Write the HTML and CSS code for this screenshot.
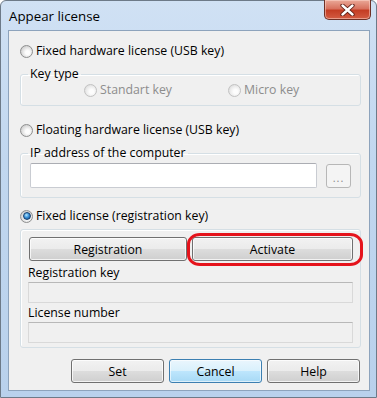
FILE: index.html
```html
<!DOCTYPE html>
<html lang="en">
<head>
  <meta charset="UTF-8">
  <title>Appear license</title>
  <link rel="stylesheet" href="styles.css">
</head>
<body>

<div class="window">
  <div class="titlebar">
    <span class="title">Appear license</span>
    <span class="close">
      <svg width="15" height="12" viewBox="0 0 15 12">
        <path d="M2.5 1.5 L12.5 10.5 M12.5 1.5 L2.5 10.5" stroke="#5a1a12" stroke-width="4.2" stroke-linecap="round"/>
        <path d="M2.5 1.5 L12.5 10.5 M12.5 1.5 L2.5 10.5" stroke="#fff" stroke-width="2.4" stroke-linecap="round"/>
      </svg>
    </span>
  </div>

  <div class="client">
    <div class="option"><span class="radio"></span>Fixed hardware license (USB key)</div>

    <fieldset class="group key-type">
      <legend>Key type</legend>
      <div class="choices">
        <span class="option small disabled first"><span class="radio"></span>Standart key</span>
        <span class="option small disabled"><span class="radio"></span>Micro key</span>
      </div>
    </fieldset>

    <div class="option second"><span class="radio"></span>Floating hardware license (USB key)</div>

    <fieldset class="group ip-group">
      <legend>IP address of the computer</legend>
      <div class="ip-row">
        <input type="text" class="field">
        <button class="browse">...</button>
      </div>
    </fieldset>

    <div class="option third"><span class="radio checked"></span>Fixed license (registration key)</div>

    <fieldset class="group reg-group">
      <div class="reg-buttons">
        <button class="btn reg">Registration</button>
        <span class="marked"><button class="btn activate">Activate</button></span>
      </div>
      <div class="label">Registration key</div>
      <input type="text" class="field disabled" disabled>
      <div class="label">License number</div>
      <input type="text" class="field disabled" disabled>
    </fieldset>

    <div class="actions">
      <button class="btn">Set</button>
      <button class="btn default">Cancel</button>
      <button class="btn">Help</button>
    </div>
  </div>
</div>

</body>
</html>
```

FILE: styles.css
```css
body {
  margin: 0;
  font-family: "Open Sans", "Noto Sans", sans-serif;
  font-size: 12.3px;
  color: #000;
  background: #fff;
}

.window {
  width: 377px;
  height: 398px;
  box-sizing: border-box;
  border: 1px solid #6d7a88;
  border-radius: 6px 6px 0 0;
  background: linear-gradient(#d0e1f4, #c1d7ef 40%, #b9d1ec);
  display: flex;
  flex-direction: column;
}

.titlebar {
  height: 29px;
  display: flex;
  justify-content: space-between;
  align-items: flex-start;
}

.title {
  margin: 7px 0 0 8px;
  line-height: 17px;
  font-size: 13.3px;
}

.close {
  width: 47px;
  height: 20px;
  margin: -1px 5px 0 0;
  box-sizing: border-box;
  border: 1px solid #6e3026;
  border-top: none;
  border-radius: 0 0 5px 5px;
  background: linear-gradient(#eaa998, #d8725f 45%, #c43d24 55%, #d35c43);
  box-shadow: inset 0 0 0 1px rgba(255, 220, 210, 0.5);
  display: flex;
  justify-content: center;
  align-items: center;
}

.client {
  flex: 1;
  margin: 0 6px 6px 7px;
  border: 1px solid #8da3bc;
  background: #f0f0f0;
  padding: 10px 8px 0 11px;
}

.option {
  display: flex;
  align-items: center;
  gap: 3px;
  height: 20px;
  line-height: 16px;
}

.option.small {
  height: 16px;
}

.option.disabled {
  color: #8d8d8d;
}

.option.second {
  margin-top: 14px;
}

.option.third {
  margin-top: 8px;
}

.radio {
  position: relative;
  width: 13px;
  height: 13px;
  box-sizing: border-box;
  border-radius: 50%;
  border: 1px solid #8e8f8f;
  background: radial-gradient(circle at 60% 60%, #fdfdfd 0 2px, #e2e2e2 5px, #cfcfcf 7px);
  flex-shrink: 0;
}

.disabled .radio {
  border-color: #c2c2c2;
  background: radial-gradient(circle at 60% 60%, #fdfdfd 0 2px, #ededed 5px, #e0e0e0 7px);
}

.radio.checked::after {
  content: "";
  position: absolute;
  left: 1.5px;
  top: 1.5px;
  width: 8px;
  height: 8px;
  box-sizing: border-box;
  border-radius: 50%;
  border: 1px solid #173f6b;
  background: radial-gradient(circle at 40% 35%, #b4e8ff 0, #3c93da 45%, #0e4887 100%);
}

.group {
  margin: 5px 0 0 0;
  border: 1px solid #d5dfe5;
  border-radius: 3px;
  box-shadow: inset 1px 1px 0 #fff;
  min-width: 0;
}

.group legend {
  padding: 0 2px;
  margin-left: -2px;
  line-height: 16px;
}

.key-type {
  padding: 0 8px 7px 9px;
}

.choices {
  display: flex;
  padding-left: 54px;
}

.choices .first {
  width: 144px;
}

.ip-group {
  padding: 2px 9px 9px 9px;
}

.ip-row {
  display: flex;
  gap: 9px;
}

.field {
  display: block;
  height: 25px;
  box-sizing: border-box;
  margin: 0;
  border: 1px solid #c9ccd2;
  border-top-color: #abadb3;
  border-radius: 2px;
  background: #fff;
  font: inherit;
}

.ip-row .field {
  width: 287px;
}

.browse {
  width: 25px;
  height: 24px;
  margin: 1px 0 0 0;
  padding: 4px 0 0 0;
  box-sizing: border-box;
  border: 1px solid #b7b7b7;
  border-radius: 3px;
  background: #f4f4f4;
  color: #8a8a8a;
  font: inherit;
  font-size: 11px;
  line-height: 14px;
  letter-spacing: 1px;
}

.reg-group {
  margin-top: 3px;
  padding: 7px 7px 4px 7px;
}

.reg-buttons {
  display: flex;
  gap: 5px;
  padding-left: 1px;
}

.btn {
  height: 24px;
  box-sizing: border-box;
  margin: 0;
  padding: 0;
  border: 1px solid #707070;
  border-radius: 3px;
  background: linear-gradient(#f2f2f2, #ebebeb 49%, #dddddd 50%, #cfcfcf);
  box-shadow: inset 0 0 0 1px rgba(255, 255, 255, 0.75);
  font: inherit;
  color: #000;
}

.btn.reg {
  width: 158px;
}

.btn.activate {
  width: 161px;
  display: block;
}

.btn.default {
  border-color: #3c7fb1;
  background: linear-gradient(#eaf6fd, #d9f0fc 49%, #bee6fd 50%, #a7d9f5);
  box-shadow: inset 0 0 0 1px rgba(255, 255, 255, 0.6);
}

.marked {
  position: relative;
  display: block;
}

.marked::after {
  content: "";
  position: absolute;
  left: -5px;
  right: -10px;
  top: -4px;
  bottom: -5px;
  border: 3.5px solid #e5131b;
  border-radius: 13px / 11px;
}

.label {
  margin-top: 4px;
  line-height: 16px;
}

.field.disabled {
  width: 325px;
  height: 21px;
  background: #f0f0f0;
  border-color: #d9d9d9;
  border-top-color: #b8b8b8;
  border-radius: 0;
}

.reg-group .label + .field {
  margin-top: 1px;
}

.reg-group .field + .label {
  margin-top: 2px;
}

.actions {
  display: flex;
  justify-content: flex-end;
  gap: 5px;
  margin: 11px 1px 0 0;
}

.actions .btn {
  width: 93px;
}
```
